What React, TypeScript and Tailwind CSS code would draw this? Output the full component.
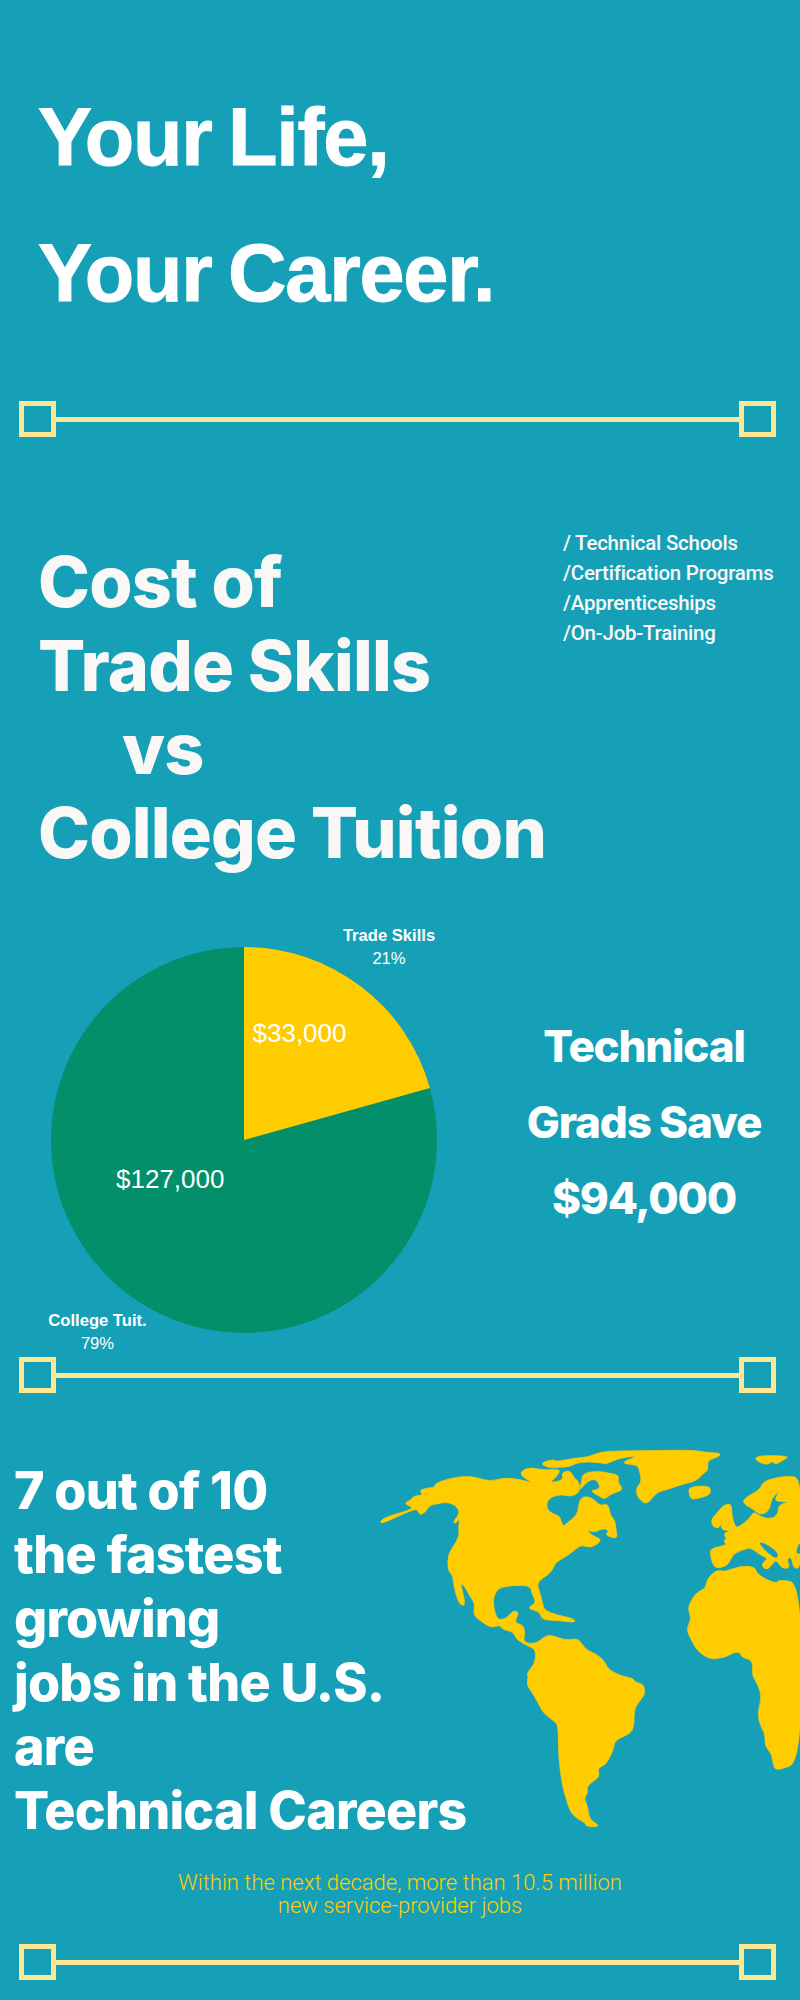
type Pt = [number, number]

// map outlines, traced at 3x from the top-left corner of the map box
const northAmerica: Pt[] = [
  [225,160],[270,145],[315,138],[350,142],[390,155],[430,143],[470,147],[505,155],[520,160],[500,148],[482,135],[485,122],[510,112],[550,120],[595,118],[600,125],[585,145],[570,157],[590,155],[610,148],[605,130],[620,122],[635,127],[642,145],[655,152],[660,175],[655,190],[630,200],[605,193],[575,200],[560,215],[562,240],[580,252],[600,258],[608,290],[620,280],[650,255],[655,235],[660,205],[680,198],[705,210],[720,228],[745,220],[750,255],[765,270],[768,300],[772,318],[765,325],[735,315],[748,300],[725,295],[705,308],[680,300],[695,315],[710,322],[725,330],[705,348],[685,352],[665,345],[650,355],[625,375],[600,390],[585,400],[575,425],[555,440],[530,458],[540,490],[548,520],[552,540],[590,555],[640,565],[648,578],[600,572],[545,570],[540,545],[500,535],[530,518],[515,490],[512,470],[480,465],[430,470],[410,480],[398,510],[405,550],[415,570],[440,565],[460,540],[478,548],[462,578],[490,585],[495,610],[490,630],[500,640],[530,640],[550,622],[570,614],[600,625],[625,630],[655,625],[678,660],[710,672],[735,695],[745,720],[790,740],[820,745],[825,757],[850,762],[855,785],[850,800],[825,830],[822,860],[822,890],[810,912],[765,930],[760,960],[745,990],[735,1005],[712,1015],[720,1040],[690,1060],[680,1075],[685,1085],[672,1105],[680,1120],[685,1145],[690,1170],[723,1190],[680,1190],[675,1178],[650,1165],[630,1145],[620,1110],[610,1080],[600,1020],[595,960],[595,890],[585,875],[550,850],[535,820],[515,785],[500,765],[505,740],[500,730],[525,700],[528,660],[505,648],[470,630],[460,605],[430,600],[420,585],[395,592],[380,585],[350,565],[340,550],[345,520],[330,500],[315,470],[300,455],[318,527],[300,525],[290,500],[282,470],[278,435],[265,425],[262,375],[290,335],[298,310],[295,290],[300,265],[285,282],[280,275],[295,255],[298,242],[285,225],[260,216],[230,222],[210,225],[195,248],[180,255],[175,245],[167,235],[90,270],[65,280],[60,275],[75,262],[165,235],[140,225],[135,218],[155,208],[160,198],[190,195],[178,182],[195,175],[225,172],
]
const greenland: Pt[] = [
  [538,100],[580,88],[590,95],[640,85],[690,80],[720,66],[780,62],[880,62],[1000,60],[1040,68],[1078,68],[1082,78],[1050,88],[1042,100],[1045,120],[1025,135],[1010,152],[980,160],[950,168],[925,178],[895,185],[880,200],[862,222],[845,215],[830,195],[828,175],[845,155],[838,120],[832,105],[795,102],[790,95],[835,78],[790,82],[760,92],[740,102],[730,100],[690,95],[650,98],[630,110],[600,112],[570,115],
]
const baffin: Pt[] = [
  [668,130],[710,123],[740,128],[778,135],[772,155],[790,178],[770,186],[748,195],[735,208],[720,200],[690,182],[708,180],[722,172],[708,147],[690,150],[672,165],[658,182],[665,155],
]
const europe: Pt[] = [
  [1325,142],[1280,138],[1240,145],[1210,155],[1200,178],[1170,195],[1148,210],[1155,225],[1180,237],[1195,252],[1215,252],[1230,235],[1235,205],[1260,180],[1245,205],[1250,215],[1290,215],[1255,225],[1255,250],[1240,265],[1215,265],[1195,255],[1180,245],[1170,265],[1135,292],[1125,290],[1115,255],[1115,220],[1090,225],[1070,250],[1052,270],[1060,292],[1078,295],[1090,270],[1082,290],[1090,302],[1115,300],[1090,310],[1100,325],[1090,335],[1102,345],[1050,355],[1052,380],[1060,408],[1075,415],[1105,405],[1120,370],[1155,358],[1172,352],[1200,375],[1225,385],[1205,400],[1210,415],[1225,418],[1240,398],[1250,390],[1265,415],[1290,415],[1280,385],[1295,382],[1300,415],[1325,415],
]
const africa: Pt[] = [
  [1040,450],[1060,428],[1075,420],[1095,425],[1140,408],[1185,410],[1192,435],[1250,462],[1255,448],[1325,460],[1325,995],[1252,1022],[1240,1010],[1235,970],[1215,950],[1215,910],[1202,890],[1192,850],[1205,805],[1195,765],[1175,735],[1180,692],[1145,682],[1140,666],[1120,668],[1100,680],[1050,690],[1010,660],[1000,640],[978,600],[995,565],[982,535],[1000,500],[1015,485],[1037,475],
]
const svalbard: Pt[] = [[1182,85],[1205,76],[1290,78],[1270,90],[1245,105],[1238,92],[1225,105],[1200,98]]
const iceland: Pt[] = [[985,170],[1050,167],[1052,190],[1040,198],[995,210],[988,195]]
const blackSea: Pt[] = [[1200,335],[1230,348],[1255,370],[1250,388],[1225,370],[1200,345]]
const caspian: Pt[] = [[1305,370],[1322,330],[1325,372]]

function smooth(pts: Pt[]) {
  const mid = (a: Pt, b: Pt) => `${(a[0] + b[0]) / 2},${(a[1] + b[1]) / 2}`
  let d = `M${mid(pts[pts.length - 1], pts[0])}`
  pts.forEach((p, i) => {
    d += ` Q${p[0]},${p[1]} ${mid(p, pts[(i + 1) % pts.length])}`
  })
  return d + 'Z'
}

function Divider() {
  return (
    <div className="flex items-center h-9 pl-[19px] pr-[24px]">
      <div className="w-[37px] h-9 border-[5px] border-[#fbe795]" />
      <div className="flex-1 h-[5px] bg-[#fbe795]" />
      <div className="w-[37px] h-9 border-[5px] border-[#fbe795]" />
    </div>
  )
}

function WorldMap() {
  return (
    <svg className="absolute left-[360px] top-[37px]" width="440" height="420" viewBox="0 0 1320 1260">
      <g fill="#ffcc00" stroke="#ffcc00" strokeWidth="2" strokeLinejoin="round">
        {[northAmerica, greenland, baffin, europe, africa, svalbard, iceland].map((pts, i) => (
          <path key={i} d={smooth(pts)} />
        ))}
      </g>
      <g fill="#16a0b8">
        <path d={smooth(blackSea)} />
        <path d={smooth(caspian)} />
      </g>
    </svg>
  )
}

export default function App() {
  return (
    <div className="w-[800px] h-[2000px] overflow-hidden bg-[#16a0b8] text-white font-['Inter',sans-serif]">
      <h1 className="pt-[69px] pl-[38px] h-[341px] mb-[60px] font-['Liberation_Sans',sans-serif] font-bold text-[81px] leading-[136px] tracking-[-1.2px] [word-spacing:-5px] [-webkit-text-stroke:1px_white]">
        <div>Your Life,</div>
        <div>Your Career.</div>
      </h1>
      <Divider />

      <div className="flex justify-between h-[437px] pl-[38px] pr-[26px] text-[#f9f8f6]">
        <div className="pt-[103px] font-extrabold text-[70px] leading-[83.5px] tracking-[-0.8px]">
          <div>Cost of</div>
          <div>Trade Skills</div>
          <div className="pl-[84px]">vs</div>
          <div>College Tuition</div>
        </div>
        <div className="pt-[91px] w-[211px] font-['Roboto',sans-serif] font-medium text-[20.5px] leading-[30px] tracking-[-0.25px] whitespace-nowrap">
          <div>/ Technical Schools</div>
          <div>/Certification Programs</div>
          <div>/Apprenticeships</div>
          <div>/On-Job-Training</div>
        </div>
      </div>

      <div className="relative flex items-start h-[483px]">
        <svg className="mt-[73px] ml-[51px] shrink-0" width="386" height="386" viewBox="-193 -193 386 386">
          <circle r="193" fill="#048f6b" />
          <path d="M0,0 L0,-193 A193,193 0 0 1 186,-52 Z" fill="#ffcc00" />
        </svg>
        <div className="ml-[57px] mt-[134px] w-[300px] text-center font-extrabold text-[44px] leading-[76px] tracking-[-1.2px]">
          <div>Technical</div>
          <div>Grads Save</div>
          <div>$94,000</div>
        </div>
        <div className="absolute left-[339px] top-[49.7px] w-[100px] text-center font-['Liberation_Sans',sans-serif] text-[16.6px] leading-[23px]">
          <div className="font-bold">Trade Skills</div>
          <div>21%</div>
        </div>
        <div className="absolute left-[47.5px] top-[434.7px] w-[100px] text-center font-['Liberation_Sans',sans-serif] text-[16.6px] leading-[23px]">
          <div className="font-bold whitespace-nowrap">College Tuit.</div>
          <div>79%</div>
        </div>
        <div className="absolute left-[252.5px] top-[144px] font-['Liberation_Sans',sans-serif] text-[26px] leading-[30px]">$33,000</div>
        <div className="absolute left-[116px] top-[289.5px] font-['Liberation_Sans',sans-serif] text-[26px] leading-[30px]">$127,000</div>
      </div>
      <Divider />

      <div className="relative pt-[66px] pl-[14px] font-extrabold text-[52px] leading-[64px] tracking-[-0.8px]">
        <WorldMap />
        <div className="relative">7 out of 10</div>
        <div className="relative">the fastest</div>
        <div className="relative">growing</div>
        <div className="relative">jobs in the U.S.</div>
        <div className="relative">are</div>
        <div className="relative">Technical Careers</div>
      </div>

      <div className="mt-[28px] mb-[27px] text-center text-[#ffcc00] font-['Roboto',sans-serif] font-light text-[22px] leading-[23px]">
        <div>Within the next decade, more than 10.5 million</div>
        <div>new service-provider jobs</div>
      </div>
      <Divider />
    </div>
  )
}
